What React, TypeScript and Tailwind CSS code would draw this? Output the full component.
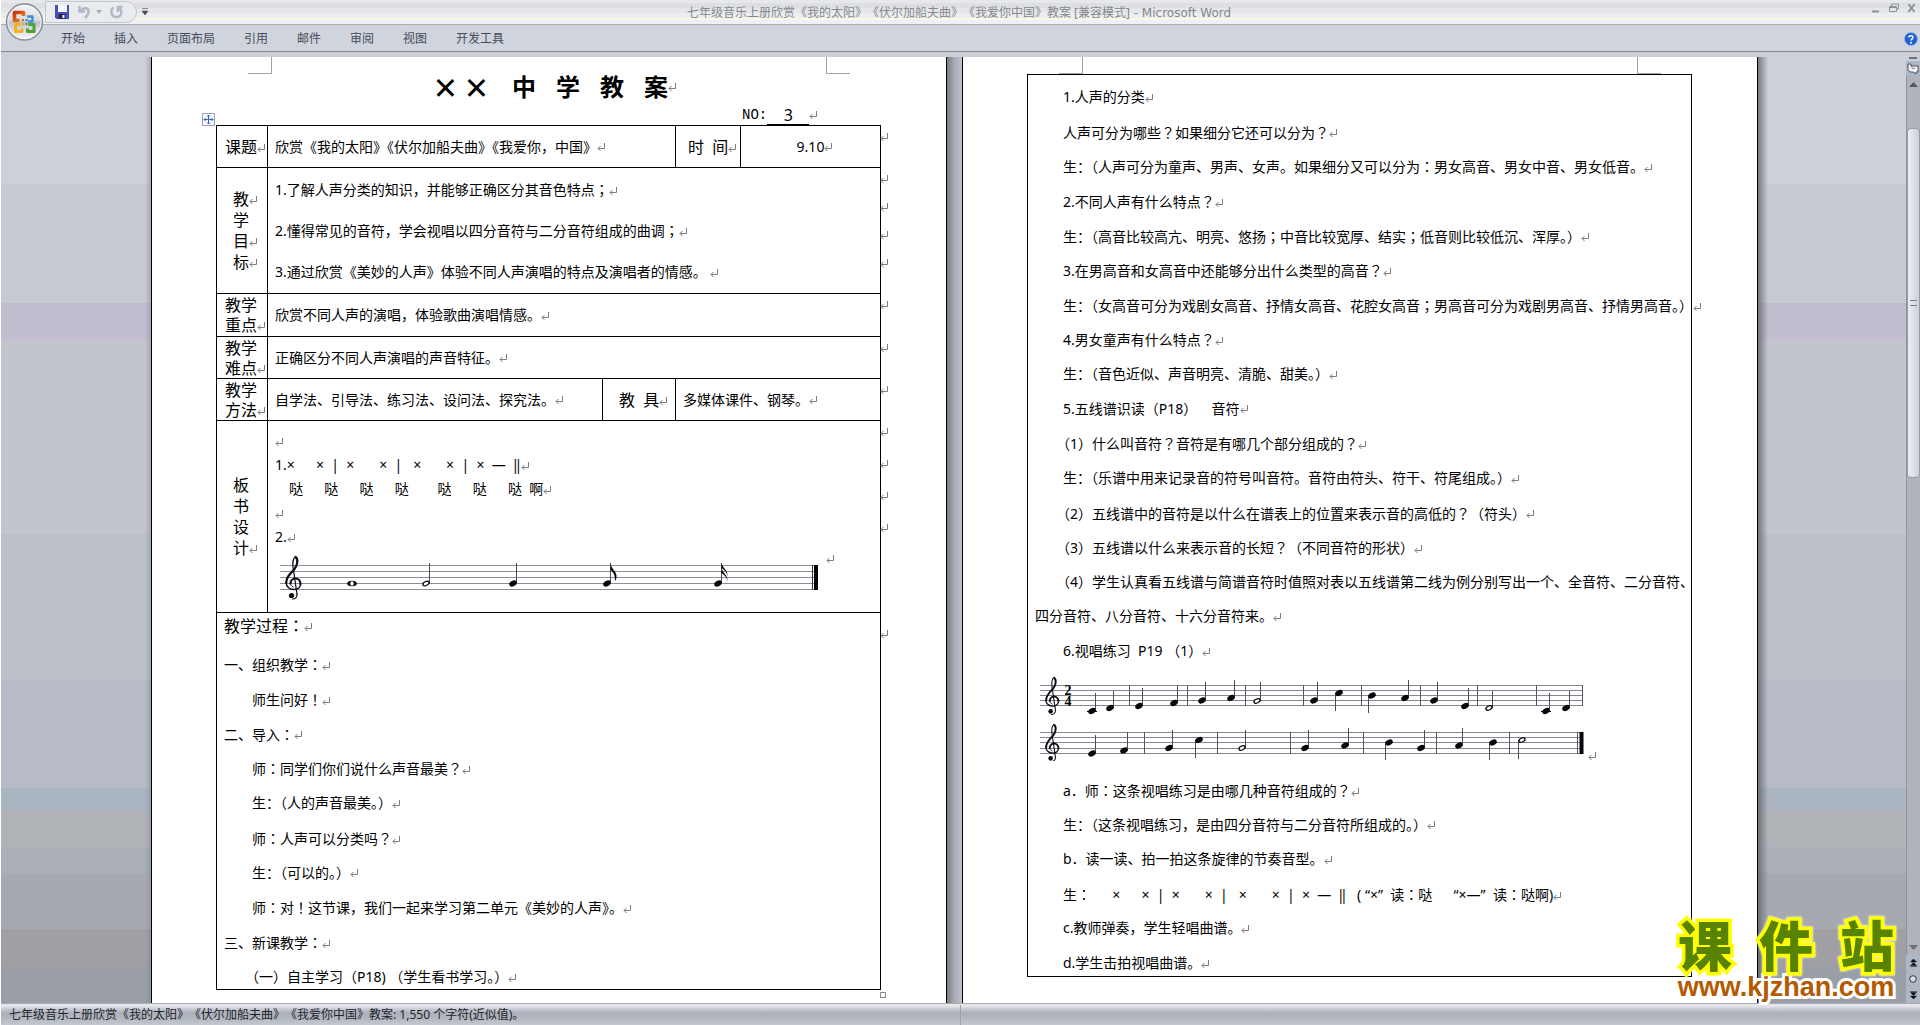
import React from "react";

const tabs = ["开始", "插入", "页面布局", "引用", "邮件", "审阅", "视图", "开发工具"];

const processLines = [
  { text: "一、组织教学：", indent: false },
  { text: "师生问好！", indent: true },
  { text: "二、导入：", indent: false },
  { text: "师：同学们你们说什么声音最美？", indent: true },
  { text: "生：（人的声音最美。）", indent: true },
  { text: "师：人声可以分类吗？", indent: true },
  { text: "生：（可以的。）", indent: true },
  { text: "师：对！这节课，我们一起来学习第二单元《美妙的人声》。", indent: true },
  { text: "三、新课教学：", indent: false },
  { text: "（一）自主学习（P18) （学生看书学习。）", indent: true },
];

const voiceLines = [
  { text: "1.人声的分类", indent: true },
  { text: "人声可分为哪些？如果细分它还可以分为？", indent: true },
  { text: "生：（人声可分为童声、男声、女声。如果细分又可以分为：男女高音、男女中音、男女低音。", indent: true },
  { text: "2.不同人声有什么特点？", indent: true },
  { text: "生：（高音比较高亢、明亮、悠扬；中音比较宽厚、结实；低音则比较低沉、浑厚。）", indent: true },
  { text: "3.在男高音和女高音中还能够分出什么类型的高音？", indent: true },
  { text: "生：（女高音可分为戏剧女高音、抒情女高音、花腔女高音；男高音可分为戏剧男高音、抒情男高音。）", indent: true },
  { text: "4.男女童声有什么特点？", indent: true },
  { text: "生：（音色近似、声音明亮、清脆、甜美。）", indent: true },
  { text: "5.五线谱识读（P18）　  音符", indent: true },
  { text: "（1）什么叫音符？音符是有哪几个部分组成的？", indent: true },
  { text: "生：（乐谱中用来记录音的符号叫音符。音符由符头、符干、符尾组成。）", indent: true },
  { text: "（2）五线谱中的音符是以什么在谱表上的位置来表示音的高低的？（符头）", indent: true },
  { text: "（3）五线谱以什么来表示音的长短？（不同音符的形状）", indent: true },
  { text: "（4）学生认真看五线谱与简谱音符时值照对表以五线谱第二线为例分别写出一个、全音符、二分音符、", indent: true, open: true },
  { text: "四分音符、八分音符、十六分音符来。", indent: false },
  { text: "6.视唱练习  P19 （1）", indent: true },
];

const exerciseLines = [
  { text: "a．师：这条视唱练习是由哪几种音符组成的？", indent: true },
  { text: "生：（这条视唱练习，是由四分音符与二分音符所组成的。）", indent: true },
  { text: "b．读一读、拍一拍这条旋律的节奏音型。", indent: true },
  { text: "生：　  ×　  ×  |  ×　   ×  |   ×　   ×  |  ×  —  ‖   ( “×”  读：哒　  “×—”  读：哒啊)", indent: true },
  { text: "c.教师弹奏，学生轻唱曲谱。", indent: true },
  { text: "d.学生击拍视唱曲谱。", indent: true },
];

type Note = { x: number; y: number; stem: number; half?: boolean; ledger?: boolean };

const firstStaff: Note[] = [
  { x: 52, y: 36, stem: 18, ledger: true },
  { x: 70, y: 33, stem: 16 },
  { x: 99, y: 31, stem: 13 },
  { x: 134, y: 28, stem: 10 },
  { x: 162, y: 25.5, stem: 7 },
  { x: 191, y: 23, stem: 5 },
  { x: 217, y: 26, stem: 7, half: true },
  { x: 274, y: 25.5, stem: 7 },
  { x: 299, y: 18, stem: 36 },
  { x: 332, y: 20.5, stem: 38 },
  { x: 365, y: 23, stem: 5 },
  { x: 394, y: 25.5, stem: 7 },
  { x: 425, y: 31, stem: 13 },
  { x: 449, y: 33, stem: 16, half: true },
  { x: 506, y: 36, stem: 18, ledger: true },
  { x: 526, y: 33, stem: 16 },
];

const secondStaff: Note[] = [
  { x: 52, y: 78.5, stem: 60 },
  { x: 84, y: 75.5, stem: 57 },
  { x: 129, y: 73, stem: 55 },
  { x: 159, y: 65, stem: 83 },
  { x: 202, y: 73, stem: 55, half: true },
  { x: 265, y: 73, stem: 55 },
  { x: 305, y: 70.5, stem: 53 },
  { x: 349, y: 67.5, stem: 85 },
  { x: 381, y: 73, stem: 55 },
  { x: 419, y: 70.5, stem: 53 },
  { x: 453, y: 67.5, stem: 85 },
  { x: 482, y: 65, stem: 84, half: true },
];

function Mark() {
  return (
    <svg className="inline-block align-middle" width="8" height="9" viewBox="0 0 8 9" aria-hidden="true">
      <path d="M7.500 0v5.500H1M3.500 3L1 5.500 3.500 8" fill="none" stroke="#7d7d7d" />
    </svg>
  );
}

function RowMarks({ count = 1, className = "pt-[3px]" }: { count?: number; className?: string }) {
  return (
    <span className={`absolute left-full top-0 flex flex-col ${className}`}>
      {Array.from({ length: count }, (_, i) => (
        <span key={i} className="block leading-none">
          <Mark />
        </span>
      ))}
    </span>
  );
}

// ？！；： sit in the middle of their square, the other signs keep to the left
function Centred({ text }: { text: string }) {
  const parts = text.split(/([？！；]|：(?!（))/);
  return (
    <>
      {parts.map((part, i) =>
        i % 2 === 1 ? (
          <span key={i} className="font-['Noto_Sans_CJK_JP',sans-serif]" lang="ja">
            {part}
          </span>
        ) : (
          part
        )
      )}
    </>
  );
}

function Line({ text, indent, open }: { text: string; indent: boolean; open?: boolean }) {
  return (
    <p className={`h-5 whitespace-pre text-sm leading-5 ${indent ? "pl-7" : ""}`}>
      <Centred text={text} />
      {!open && <Mark />}
    </p>
  );
}

function Clef({ x, y, scale = 1 }: { x: number; y: number; scale?: number }) {
  return (
    <g transform={`translate(${x} ${y}) scale(${scale})`} fill="none" stroke="#0b0b14" strokeLinecap="round">
      <path d="M12 38L8 11C7.400 5 9 1.500 10.500 1" strokeWidth="1.200" />
      <path d="M10.500 1C13.500 3 12.500 9.500 9.500 13C5 18 1.200 21 1.200 27" strokeWidth="2.200" />
      <path d="M1.200 27C1.200 31 5 33.500 9 33.500C13 33.500 15.500 31 15.500 28" strokeWidth="1.500" />
      <path d="M15.500 28C15.500 24.500 13 22.500 10.500 22.500C7.500 22.500 5.500 25 5.500 27.500" strokeWidth="2.200" />
      <path d="M5.500 27.500C5.500 29 6.500 30.500 8 31" strokeWidth="1" />
      <path d="M12 38C12.300 41.500 10 43.200 7.500 43" strokeWidth="1.200" />
      <circle cx="6.500" cy="39.500" r="2.600" fill="#0b0b14" stroke="none" />
    </g>
  );
}

function NoteShape({ x, y, stem, half, ledger }: Note) {
  const stemX = stem < y ? x + 3.5 : x - 3.5;
  return (
    <g>
      <path d={`M${stemX} ${y}V${stem}`} stroke="#4d4d58" strokeWidth="1" />
      <ellipse
        cx={x}
        cy={y}
        rx={half ? 3.2 : 4}
        ry={half ? 1.9 : 2.7}
        transform={`rotate(-25 ${x} ${y})`}
        fill={half ? "#fff" : "#05050a"}
        stroke={half ? "#05050a" : "none"}
        strokeWidth="1.300"
      />
      {ledger && <path d={`M${x - 5} ${y + 0.5}h10`} stroke="#05050a" />}
    </g>
  );
}

function BoardStaff() {
  return (
    <svg className="ml-[5px] block" width="538" height="46" viewBox="0 0 538 46" aria-label="音符">
      {[10.5, 16.5, 22.5, 28.5, 34.5].map((y) => (
        <path key={y} d={`M0 ${y}H538`} stroke="#8f9097" />
      ))}
      <Clef x={5} y={1} />
      <ellipse cx="72" cy="28.500" rx="4.800" ry="2.800" fill="#05050a" />
      <ellipse cx="72" cy="28.500" rx="1.600" ry="2.200" fill="#fff" />
      <NoteShape x={146} y={28.5} stem={8} half />
      <NoteShape x={233} y={28.5} stem={8} />
      <NoteShape x={327} y={28.5} stem={8} />
      <path d="M330.500 8c.500 6 6 8 6 13 0 2-.500 4-1.500 5 0-6-1-8-4.500-11z" fill="#05050a" />
      <NoteShape x={438} y={28.5} stem={8} />
      <path d="M441.500 8c1 5 6.500 7 6 13-1-4-3-6-6-8zM441.500 13c1 5 6.500 7 6 13-1-4-3-6-6-8z" fill="#05050a" />
      <path d="M532.500 10v25" stroke="#33333c" />
      <path d="M536 10v25" stroke="#05050a" strokeWidth="4" />
    </svg>
  );
}

function ExerciseStaves() {
  return (
    <svg className="block" width="544" height="86" viewBox="0 0 544 86" aria-label="视唱练习">
      {[10.5, 15.5, 20.5, 25.5, 30.5].map((y) => (
        <path key={y} d={`M0 ${y}H543`} stroke="#85868f" />
      ))}
      {[57.5, 62.5, 67.5, 73.5, 78.5].map((y) => (
        <path key={y} d={`M0 ${y}H543`} stroke="#85868f" />
      ))}
      {[90, 148, 206, 264, 322, 381, 438, 497, 543].map((x) => (
        <path key={x} d={`M${x - 0.5} 10v21`} stroke="#555661" />
      ))}
      {[105, 178, 251, 324, 397, 470, 538].map((x) => (
        <path key={x} d={`M${x - 0.5} 57v22`} stroke="#555661" />
      ))}
      <path d="M541.500 57v22" stroke="#05050a" strokeWidth="4" />
      <Clef x={5} y={2} scale={0.87} />
      <Clef x={5} y={49} scale={0.87} />
      <g className="font-['Liberation_Serif',serif] text-[14px] font-bold" textAnchor="middle">
        <text x="28" y="20">2</text>
        <text x="28" y="31">4</text>
      </g>
      {firstStaff.map((note) => (
        <NoteShape key={note.x} {...note} />
      ))}
      {secondStaff.map((note) => (
        <NoteShape key={note.x} {...note} />
      ))}
    </svg>
  );
}

function CornerMarks() {
  return (
    <div className="absolute inset-x-24 top-0 flex justify-between">
      <span className="h-[17px] w-6 border-b border-r border-[#a3a3a3]" />
      <span className="h-[17px] w-6 border-b border-l border-[#a3a3a3]" />
    </div>
  );
}

function OfficeButton() {
  return (
    <button className="absolute left-1 top-[2px] z-10" aria-label="Office">
      <svg width="39" height="40" viewBox="0 0 39 40">
        <defs>
          <linearGradient id="orb" x1="0" y1="0" x2="0" y2="1">
            <stop offset="0" stopColor="#f4f5f7" />
            <stop offset="0.450" stopColor="#d9dbe0" />
            <stop offset="0.500" stopColor="#bdc1c8" />
            <stop offset="1" stopColor="#fcfcfd" />
          </linearGradient>
          <linearGradient id="red" x1="0" y1="0" x2="1" y2="1">
            <stop offset="0" stopColor="#c9300c" />
            <stop offset="1" stopColor="#f58a1c" />
          </linearGradient>
        </defs>
        <circle cx="19.500" cy="20" r="18" fill="url(#orb)" stroke="#8c9097" strokeWidth="1.500" />
        <circle cx="19.500" cy="20" r="16.500" fill="none" stroke="#fff" strokeOpacity=".7" />
        <g fill="none" strokeLinejoin="round">
          <path d="M14.500 18.500H9.500V10.500H18.500v3.500" stroke="url(#red)" strokeWidth="3.600" />
          <path d="M22 14.500h5.500v5H23" stroke="#3f8fd6" strokeWidth="2.400" />
          <path d="M15.500 22.500h-5V29.500H17v-3" stroke="#f6b01e" strokeWidth="3" />
          <path d="M23.500 22.500h5.500v7h-6.500v-3" stroke="#4da32f" strokeWidth="3" />
        </g>
        <path d="M17 17h2v2h-2z" fill="#e8581a" />
        <path d="M20.500 17h2v2h-2z" fill="#2f7fd0" />
        <path d="M17 21h2v2h-2z" fill="#f3a41a" />
        <path d="M20.500 21h2v2h-2z" fill="#3f9a2f" />
      </svg>
    </button>
  );
}

function TitleBar() {
  return (
    <header className="relative shrink-0">
      <OfficeButton />
      <div className="flex h-[25px] items-start justify-between border-b border-[#a9adb3] bg-[linear-gradient(#e6e8eb_3px,#dddfe3_3px,#dddfe3_8px,#e4e6e9_8px,#e4e6e9_13px,#eceef0_13px,#eceef0_18px,#faf8e4_18px,#faf8e4_20px,#edf1f5_20px)]">
        <div className="flex flex-1 items-center">
          <div className="ml-11 mt-px flex h-[22px] w-[92px] items-center rounded-r-full border border-[#c3c7ce] bg-[#e9ebef] pl-[9px]">
            <button aria-label="保存">
              <svg width="14" height="14" viewBox="0 0 14 14">
                <path d="M0 0h14v14H1.500L0 12.500z" fill="#4450b8" />
                <path d="M3 0h9v7H3z" fill="#f3f6fc" />
                <path d="M3.500 9h7v5h-7z" fill="#20264f" />
                <path d="M7.500 10h2v3h-2z" fill="#fff" />
              </svg>
            </button>
            <button className="ml-[9px]" aria-label="撤消">
              <svg width="13" height="14" viewBox="0 0 13 14">
                <path d="M1.500 1v5.500H7M3 6C5.500 2 11 2.500 10.500 7c0 2-1.500 4-3.500 6" fill="none" stroke="#b3b8c8" strokeWidth="2.600" />
              </svg>
            </button>
            <button className="ml-[5px]" aria-label="撤消列表">
              <svg width="6" height="4" viewBox="0 0 6 4">
                <path d="M0 0h6L3 4z" fill="#a9adb6" />
              </svg>
            </button>
            <button className="ml-2" aria-label="恢复">
              <svg width="13" height="14" viewBox="0 0 13 14">
                <path d="M3.500 2.500C0 5 1 12 6.500 12s6.500-6.500 2-9.500M12.500 2H8v5" fill="none" stroke="#b3b8c8" strokeWidth="2.500" />
              </svg>
            </button>
          </div>
          <button className="ml-[5px]" aria-label="自定义快速访问工具栏">
            <svg width="6" height="7" viewBox="0 0 6 7">
              <path d="M0 .5h6M0 3h6L3 7z" fill="#4b4e54" stroke="#4b4e54" strokeWidth=".600" />
            </svg>
          </button>
        </div>
        <h2 className="mt-[3px] whitespace-pre text-xs leading-5 text-[#85888e] [text-spacing-trim:space-all]">
          七年级音乐上册欣赏《我的太阳》《伏尔加船夫曲》《我爱你中国》教案 [兼容模式]
          <span className="font-['DejaVu_Sans',sans-serif]"> - Microsoft Word</span>
        </h2>
        <div className="flex flex-1 items-center justify-end gap-2 pr-[3px] pt-[3px]">
          <button aria-label="最小化">
            <svg width="10" height="10" viewBox="0 0 10 10">
              <path d="M1 8.500h7" stroke="#8d9198" strokeWidth="2" />
            </svg>
          </button>
          <button aria-label="还原">
            <svg width="10" height="10" viewBox="0 0 10 10" fill="none" stroke="#8d9198">
              <path d="M2.500 3V1h7v5H8M.500 3.500h7v5h-7zM.500 4.500h7" />
            </svg>
          </button>
          <button aria-label="关闭">
            <svg width="10" height="10" viewBox="0 0 10 10">
              <path d="M1.500 1l6 8M7.500 1l-6 8" stroke="#8d9198" strokeWidth="2" />
            </svg>
          </button>
        </div>
      </div>
      <nav className="flex h-[27px] items-center border-b border-[#84878d] bg-[#d0d4dd] pl-[60px] pr-[2px] pt-px">
        <div className="flex flex-1 gap-[29px] text-xs text-[#454c59]">
          {tabs.map((tab) => (
            <button key={tab}>{tab}</button>
          ))}
        </div>
        <button aria-label="帮助">
          <svg width="14" height="14" viewBox="0 0 14 14">
            <circle cx="7" cy="7" r="6.500" fill="#1f5fd0" stroke="#8ab0e6" />
            <path d="M4.800 5.500C5 3 9.300 3.200 9 5.500 8.800 6.800 7 7 7 8.500" fill="none" stroke="#fff" strokeWidth="1.500" />
            <circle cx="7" cy="10.700" r="1" fill="#fff" />
          </svg>
        </button>
      </nav>
      <div className="h-[5px] bg-[#ccced8]" />
    </header>
  );
}

function FirstPage() {
  const cell = "relative border border-black px-[7px] py-0 text-left align-middle font-normal";
  const label = "whitespace-pre border border-black p-0 text-left align-middle text-base font-normal";
  return (
    <article className="relative w-[796px] shrink-0 border-x border-black bg-white pl-16 pt-[14px]">
      <CornerMarks />
      <h1 className="mr-[52px] flex h-8 items-center justify-center text-2xl font-bold">
        <span className="text-[40px] font-normal leading-8">×</span>
        <span className="ml-2 text-[40px] font-normal leading-8">×</span>
        <span className="ml-6">中</span>
        <span className="ml-5">学</span>
        <span className="ml-5">教</span>
        <span className="ml-5">案</span>
        <Mark />
      </h1>
      <div className="flex h-[22px] items-center pl-[526px] pt-[2px]">
        <span className="font-['Liberation_Mono',monospace] text-sm">NO:</span>
        <span className="w-[42px] border-b border-black text-center text-base leading-[18px]">3</span>
        <Mark />
      </div>
      <div className="relative w-[664px]">
        <svg className="absolute -left-[14px] -top-[12px]" width="13" height="13" viewBox="0 0 13 13" aria-hidden="true">
          <path d="M.500.500h12v12H.500z" fill="#f7f8fb" stroke="#9a9ea8" />
          <path d="M6.500 2v9M2 6.500h9M5 3.500L6.500 2 8 3.500M5 9.500L6.500 11 8 9.500M3.500 5L2 6.500 3.500 8M9.500 5L11 6.500 9.500 8" fill="none" stroke="#3565c0" />
        </svg>
        <table className="w-[665px] table-fixed border-collapse text-sm">
          <colgroup>
            <col className="w-[51px]" />
            <col className="w-[335px]" />
            <col className="w-[73px]" />
            <col className="w-[65px]" />
            <col />
          </colgroup>
          <tbody>
            <tr className="h-[42px]">
              <th className={label}>
                <p className="pl-2">课题<Mark /></p>
              </th>
              <td className={cell} colSpan={2}>
                欣赏《我的太阳》《伏尔加船夫曲》《我爱你，中国》<Mark />
              </td>
              <th className={label}>
                <p className="pl-3">{"时  间"}<Mark /></p>
              </th>
              <td className={cell}>
                <p className="pl-2 text-center">9.10<Mark /></p>
                <RowMarks />
              </td>
            </tr>
            <tr className="h-[126px]">
              <th className={label}>
                <div className="pl-4 leading-[21px]">
                  <p>教<Mark /></p>
                  <p>学</p>
                  <p>目<Mark /></p>
                  <p>标<Mark /></p>
                </div>
              </th>
              <td className={`${cell} leading-[41px]`} colSpan={4}>
                <p><Centred text="1.了解人声分类的知识，并能够正确区分其音色特点；" /><Mark /></p>
                <p><Centred text="2.懂得常见的音符，学会视唱以四分音符与二分音符组成的曲调；" /><Mark /></p>
                <p>3.通过欣赏《美妙的人声》体验不同人声演唱的特点及演唱者的情感。 <Mark /></p>
                <RowMarks count={4} className="gap-[14px] pt-[3px]" />
              </td>
            </tr>
            <tr className="h-[43px]">
              <th className={label}>
                <p className="pl-2 leading-5">教学<br />重点<Mark /></p>
              </th>
              <td className={cell} colSpan={4}>
                欣赏不同人声的演唱，体验歌曲演唱情感。<Mark />
                <RowMarks />
              </td>
            </tr>
            <tr className="h-[42px]">
              <th className={label}>
                <p className="pl-2 leading-5">教学<br />难点<Mark /></p>
              </th>
              <td className={cell} colSpan={4}>
                正确区分不同人声演唱的声音特征。<Mark />
                <RowMarks />
              </td>
            </tr>
            <tr className="h-[42px]">
              <th className={label}>
                <p className="pl-2 leading-5">教学<br />方法<Mark /></p>
              </th>
              <td className={cell}>自学法、引导法、练习法、设问法、探究法。<Mark /></td>
              <th className={label}>
                <p className="pl-4">{"教  具"}<Mark /></p>
              </th>
              <td className={cell} colSpan={2}>
                多媒体课件、钢琴。<Mark />
                <RowMarks />
              </td>
            </tr>
            <tr className="h-[192px]">
              <th className={label}>
                <div className="pl-4 leading-[21px]">
                  <p>板</p>
                  <p>书</p>
                  <p>设</p>
                  <p>计<Mark /></p>
                </div>
              </th>
              <td className="relative whitespace-pre border border-black px-[7px] pb-0 pt-2 text-left align-top leading-6" colSpan={4}>
                <p><Mark /></p>
                <p>{"1.×　  ×  |  ×　   ×  |   ×　   ×  |  ×  —  ‖"}<Mark /></p>
                <p>{"　哒　  哒　  哒　  哒　    哒　  哒　  哒  啊"}<Mark /></p>
                <p><Mark /></p>
                <p>2.<Mark /></p>
                <div className="mt-[6px] flex items-start gap-2">
                  <BoardStaff />
                  <Mark />
                </div>
                <RowMarks count={4} className="gap-[18px] pt-[3px]" />
              </td>
            </tr>
            <tr className="h-[377px]">
              <td className={cell} colSpan={5}>
                <p className="text-base leading-5"><Centred text="教学过程：" /><Mark /></p>
                <div className="mt-[18px] flex h-[333px] flex-col justify-between">
                  {processLines.map((line) => (
                    <Line key={line.text} {...line} />
                  ))}
                </div>
                <RowMarks className="pt-[13px]" />
              </td>
            </tr>
          </tbody>
        </table>
        <span className="absolute -bottom-2 left-full h-[6px] w-[6px] border border-[#8a8a8a]" />
      </div>
    </article>
  );
}

function SecondPage() {
  return (
    <article className="relative w-[796px] shrink-0 border-x border-black bg-white pl-16 pt-[17px]">
      <CornerMarks />
      <div className="w-[665px] border border-black px-[7px] pb-[3px] pt-3">
        <div className="flex h-[574px] flex-col justify-between">
          {voiceLines.map((line) => (
            <Line key={line.text} {...line} />
          ))}
        </div>
        <div className="ml-[5px] mt-[14px] flex items-end gap-1">
          <ExerciseStaves />
          <Mark />
        </div>
        <div className="mt-[19px] flex h-[193px] flex-col justify-between">
          {exerciseLines.map((line) => (
            <Line key={line.text} {...line} />
          ))}
        </div>
      </div>
    </article>
  );
}

function ScrollBar() {
  return (
    <aside className="flex w-[14px] shrink-0 flex-col items-center bg-[#adb8c4]">
      <div className="h-1 w-full bg-[#ccced8]">
        <span className="mx-auto block h-[2px] w-2 bg-[#6d7178]" />
      </div>
      <button className="flex h-[15px] items-center" aria-label="标尺">
        <svg width="12" height="12" viewBox="0 0 12 12">
          <path d="M1 1h3v2h7v6H9v2L6 9H3L1 7z" fill="#f4f5f7" stroke="#50555e" />
          <path d="M4 3l2 3 2-1" fill="none" stroke="#7d828b" />
        </svg>
      </button>
      <div className="flex w-full flex-1 flex-col items-center border-l border-[#8f949c] bg-[#b0b3ba]">
        <button className="flex h-4 items-center" aria-label="向上滚动">
          <svg width="9" height="5" viewBox="0 0 9 5">
            <path d="M4.500 0L9 5H0z" fill="#53575f" />
          </svg>
        </button>
        <div className="basis-9" />
        <div className="flex w-full basis-[350px] items-center justify-center rounded-sm border border-[#989ca5] bg-[linear-gradient(90deg,#eceef2,#cdd1d9)]">
          <span className="h-[6px] w-[7px] border-y border-[#777c86]" />
        </div>
        <div className="flex-1" />
        <button className="flex h-4 items-center" aria-label="向下滚动">
          <svg width="9" height="5" viewBox="0 0 9 5">
            <path d="M0 0h9L4.500 5z" fill="#6b6f78" />
          </svg>
        </button>
      </div>
      <button className="flex h-4 items-center" aria-label="前一页">
        <svg width="7" height="8" viewBox="0 0 7 8">
          <path d="M3.500 0L6.500 3h-6zM3.500 3.500l3 3h-6zM0 7.500h7" fill="#111" stroke="#111" strokeWidth=".500" />
        </svg>
      </button>
      <button className="flex h-4 items-center" aria-label="选择浏览对象">
        <svg width="8" height="8" viewBox="0 0 8 8">
          <circle cx="4" cy="4" r="3.300" fill="#d9dce0" stroke="#33363c" />
        </svg>
      </button>
      <button className="flex h-4 items-center" aria-label="下一页">
        <svg width="7" height="8" viewBox="0 0 7 8">
          <path d="M0 .5h7M.500 1.500h6l-3 3zM.500 5h6l-3 3z" fill="#111" stroke="#111" strokeWidth=".500" />
        </svg>
      </button>
    </aside>
  );
}

function Watermark() {
  return (
    <div className="absolute bottom-[2px] right-[18px] w-[232px]">
      <div className="flex h-[54px] items-center justify-between px-2 text-[54px] font-black leading-none text-[#588300] drop-shadow-[0_0_1px_white] [-webkit-text-stroke:7px_#ffff00] [paint-order:stroke_fill]">
        <span>课</span>
        <span>件</span>
        <span>站</span>
      </div>
      <p className="text-center font-['Liberation_Sans',sans-serif] text-[27px] font-bold leading-7 text-[#b35900] [-webkit-text-stroke:6px_white] [paint-order:stroke_fill]">
        www.kjzhan.com
      </p>
    </div>
  );
}

export default function App() {
  return (
    <div className="flex h-screen flex-col overflow-hidden border-l border-white font-['Noto_Sans','Noto_Sans_CJK_SC',sans-serif] text-black [text-spacing-trim:trim-start]">
      <TitleBar />
      <main className="relative flex min-h-0 flex-1 bg-[linear-gradient(#cdd0d9_127px,#c7cad3_127px,#c7cad3_246px,#c1bdcf_246px,#c1bdcf_282px,#c2c5ce_282px,#c2c5ce_477px,#bcc1c9_477px,#bcc1c9_623px,#b7bbc5_623px,#b7bbc5_731px,#aab5c1_731px,#aab5c1_753px,#b0b4b9_753px,#b0b4b9_790px,#abb0b6_790px,#abb0b6_816px,#a6aab0_816px,#a6aab0_872px,#a09fa3_872px,#a09fa3_909px,#9a9ea6_909px)]">
        <div className="flex min-w-0 flex-1 justify-center overflow-hidden pl-[6px]">
          <div className="w-[6px] bg-[linear-gradient(90deg,transparent,#85889a80)]" />
          <FirstPage />
          <div className="w-[15px] shrink-0 bg-[linear-gradient(90deg,#7b7c80,#a9abb5_50%,#bfc0ce)]" />
          <SecondPage />
          <div className="w-[10px] bg-[linear-gradient(90deg,#5c5e66c0,transparent)]" />
        </div>
        <ScrollBar />
        <Watermark />
      </main>
      <footer className="grid h-[22px] shrink-0 grid-cols-2 items-center border-t border-[#a9adb3] bg-[linear-gradient(#e5e6ea_2px,#c8cad6_5px,#acb1b9_9px,#b3b7bf_14px,#c3c7ce)] text-xs text-[#22252b]">
        <p className="whitespace-pre border-r border-[#9da1a9] pl-2 leading-5 [text-spacing-trim:space-all]">
          七年级音乐上册欣赏《我的太阳》《伏尔加船夫曲》《我爱你中国》教案: 1,550 个字符(近似值)。
        </p>
      </footer>
    </div>
  );
}
